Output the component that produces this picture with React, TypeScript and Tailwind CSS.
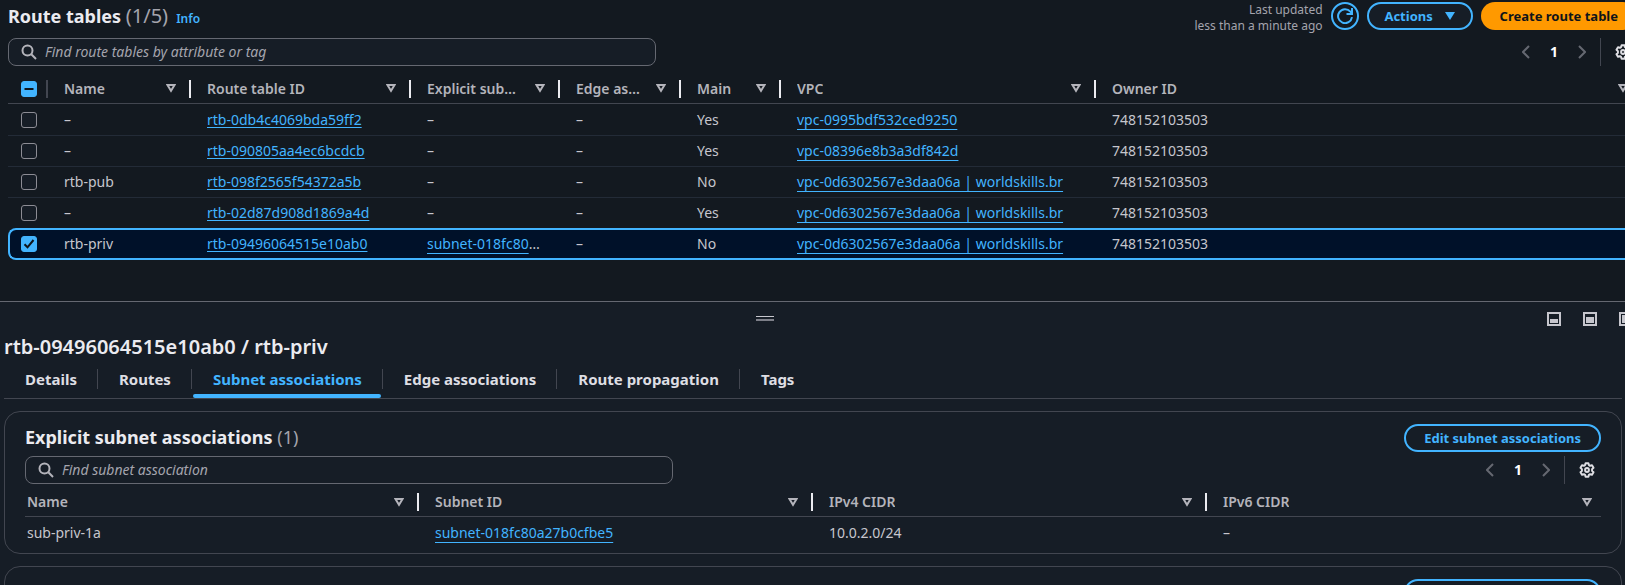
import React from "react";

const FONT = "font-['Noto_Sans','Open_Sans',sans-serif]";

function SearchIcon() {
  return (
    <svg viewBox="0 0 16 16" className="size-4 shrink-0" fill="none" stroke="#b4b4bb" strokeWidth="2" aria-hidden="true">
      <circle cx="6.5" cy="6.5" r="5" />
      <path d="M10.3 10.3 15 15" />
    </svg>
  );
}

function GearIcon() {
  return (
    <svg viewBox="0 0 16 16" className="size-4" fill="none" stroke="#dedee3" strokeWidth="2" strokeLinejoin="round" aria-hidden="true">
      <path d="M6.6 1.2h2.8l.5 1.9 1.2.7 1.9-.6 1.5 2.5-1.4 1.4v1.8l1.4 1.4-1.5 2.5-1.9-.6-1.2.7-.5 1.9H6.6l-.5-1.9-1.2-.7-1.9.6-1.5-2.5 1.4-1.4V7.1L1.5 5.7 3 3.2l1.9.6 1.2-.7z" />
      <circle cx="8" cy="8" r="1.9" />
    </svg>
  );
}

function SortIcon() {
  return (
    <svg viewBox="0 0 10 9" className="h-[9px] w-2.5 shrink-0" fill="none" stroke="#b4b4bb" strokeWidth="2" aria-hidden="true">
      <path d="M1.5 1h7L5 6.8z" />
    </svg>
  );
}

function PanelIcon({ kind }: { kind: "small" | "medium" | "side" }) {
  return (
    <svg viewBox="0 0 14 14" className="size-3.5" fill="#c6c6cd" aria-hidden="true">
      <path fillRule="evenodd" d="M0 0h14v14H0zM2 2v10h10V2z" />
      {kind === "small" && <path d="M3 7h8v4H3z" />}
      {kind === "medium" && <path d="M3 5h8v6H3z" />}
      {kind === "side" && <path d="M3 3h8v8H3z" />}
    </svg>
  );
}

function SearchBox({ id, label }: { id: string; label: string }) {
  return (
    <label
      htmlFor={id}
      className="flex h-7 w-full max-w-[648px] items-center gap-2 rounded-lg border border-[#656871] bg-[#161d26] px-3"
    >
      <SearchIcon />
      <input
        id={id}
        type="search"
        aria-label={label}
        placeholder={label}
        className="w-full min-w-0 bg-transparent text-sm leading-5 text-[#dedee3] outline-none placeholder:text-[#a4a4ad] placeholder:italic"
      />
    </label>
  );
}

function Pager() {
  return (
    <div className="flex h-7 items-center">
      <button type="button" aria-label="Previous page" className="flex w-5 justify-center">
        <svg viewBox="0 0 8 14" className="h-3.5 w-2" fill="none" stroke="#656871" strokeWidth="2">
          <path d="M7 1 1 7l6 6" />
        </svg>
      </button>
      <button type="button" className="w-9 text-center text-sm leading-5 font-bold text-white">
        1
      </button>
      <button type="button" aria-label="Next page" className="flex w-5 justify-center">
        <svg viewBox="0 0 8 14" className="h-3.5 w-2" fill="none" stroke="#656871" strokeWidth="2">
          <path d="m1 1 6 6-6 6" />
        </svg>
      </button>
      <span className="ml-2 h-7 border-l border-[#424650]" />
      <button type="button" aria-label="Preferences" className="mr-1.5 ml-3.5">
        <GearIcon />
      </button>
    </div>
  );
}

function HeadCell({ label, first, last }: { label: string; first?: boolean; last?: boolean }) {
  return (
    <th scope="col" className="p-0 text-left font-semibold">
      <div
        className={`flex h-[18px] items-center justify-between gap-4 ${first ? "pl-0.5" : "pl-4"} ${
          last ? "pr-[9px]" : "border-r-2 border-[#ebebf0] pr-[13px]"
        }`}
      >
        <span className="truncate leading-5">{label}</span>
        <button type="button" aria-label={`Sort by ${label}`}>
          <SortIcon />
        </button>
      </div>
    </th>
  );
}

function Link({ children, lined }: { children: React.ReactNode; lined?: boolean }) {
  return (
    <a
      href="#"
      className={`text-[#42b4ff] underline decoration-1 [text-decoration-skip-ink:none] ${
        lined ? "underline-offset-4" : "underline-offset-2"
      }`}
    >
      {children}
    </a>
  );
}

function Tick({ id, state }: { id: string; state: "off" | "on" | "mixed" }) {
  return (
    <span className="relative block size-4">
      <input
        type="checkbox"
        aria-label={id}
        defaultChecked={state !== "off"}
        className="block size-4 appearance-none rounded-[3px] border border-[#8c8c94] bg-[#161d26] checked:border-[#42b4ff] checked:bg-[#42b4ff]"
      />
      {state !== "off" && (
        <svg viewBox="0 0 16 16" className="pointer-events-none absolute inset-0 size-4" fill="none" stroke="#0f141a" strokeWidth="2">
          {state === "on" ? <path d="m3.5 8.3 3 3 6-7.3" /> : <path d="M3.5 8h9" />}
        </svg>
      )}
    </span>
  );
}

type Row = { name: string; id: string; subnet?: string; main: string; vpc: string; selected?: boolean };

const rows: Row[] = [
  { name: "–", id: "rtb-0db4c4069bda59ff2", main: "Yes", vpc: "vpc-0995bdf532ced9250" },
  { name: "–", id: "rtb-090805aa4ec6bcdcb", main: "Yes", vpc: "vpc-08396e8b3a3df842d" },
  { name: "rtb-pub", id: "rtb-098f2565f54372a5b", main: "No", vpc: "vpc-0d6302567e3daa06a | worldskills.br" },
  { name: "–", id: "rtb-02d87d908d1869a4d", main: "Yes", vpc: "vpc-0d6302567e3daa06a | worldskills.br" },
  {
    name: "rtb-priv",
    id: "rtb-09496064515e10ab0",
    subnet: "subnet-018fc80a27b0cfbe5",
    main: "No",
    vpc: "vpc-0d6302567e3daa06a | worldskills.br",
    selected: true,
  },
];

function RouteTables() {
  return (
    <section className="-mr-3 flex flex-col pl-2">
      <header className="flex h-9 items-start justify-between pt-0.5">
        <h1 className="text-lg leading-7 font-bold text-[#ebebf0]">
          Route tables <span className="text-xl leading-7 font-normal text-[#a4a4ad]">(1/5)</span>
          <a href="#" className="ml-2 text-xs font-semibold text-[#42b4ff]">
            Info
          </a>
        </h1>
        <div className="flex items-start gap-2">
          <p className="text-right text-xs leading-4 text-[#a4a4ad]">
            Last updated
            <br />
            less than a minute ago
          </p>
          <button
            type="button"
            aria-label="Refresh"
            className="flex size-7 items-center justify-center rounded-full border-2 border-[#42b4ff]"
          >
            <svg viewBox="0 0 16 16" className="size-4" fill="none" stroke="#42b4ff" strokeWidth="2">
              <path d="M15 9.2A7 7 0 1 1 13.4 3.6L14.6 5" />
              <path d="M15 0v6H9.5" />
            </svg>
          </button>
          <button
            type="button"
            className="flex h-7 w-[106px] items-center justify-center gap-3 rounded-full border-2 border-[#42b4ff] bg-[#161d26] text-[13px] leading-5 font-bold text-[#42b4ff]"
          >
            Actions
            <svg viewBox="0 0 10 8" className="h-2 w-2.5" fill="#42b4ff" aria-hidden="true">
              <path d="M0 0h10L5 8z" />
            </svg>
          </button>
          <button type="button" className="h-7 rounded-full bg-[#ff9900] px-[19px] text-[13px] leading-5 font-bold text-[#0f141a]">
            Create route table
          </button>
        </div>
      </header>

      <div className="mt-0.5 flex items-center justify-between">
        <SearchBox id="find-route-tables" label="Find route tables by attribute or tag" />
        <Pager />
      </div>

      <table className="mt-2 w-full table-fixed border-separate border-spacing-0 text-sm leading-5 text-[#c6c6cd]">
        <colgroup>
          <col className="w-10" />
          <col className="w-[143px]" />
          <col className="w-[220px]" />
          <col className="w-[149px]" />
          <col className="w-[121px]" />
          <col className="w-[100px]" />
          <col className="w-[315px]" />
          <col />
        </colgroup>
        <thead className="text-[#b4b4bb]">
          <tr className="h-[30px] [&>th]:border-b [&>th]:border-[#424650]">
            <th scope="col" className="p-0">
              <div className="flex h-[18px] items-center border-r-2 border-[#424650] pl-[13px]">
                <Tick id="Select all route tables" state="mixed" />
              </div>
            </th>
            <HeadCell label="Name" />
            <HeadCell label="Route table ID" />
            <HeadCell label="Explicit subnet associations" />
            <HeadCell label="Edge associations" />
            <HeadCell label="Main" />
            <HeadCell label="VPC" />
            <HeadCell label="Owner ID" last />
          </tr>
        </thead>
        <tbody>
          {rows.map((r, i) => (
            <tr
              key={r.id}
              className={
                r.selected
                  ? "h-8 bg-[#001129] [&>td]:border-y-2 [&>td]:border-[#42b4ff] [&>td:first-child]:rounded-l-lg [&>td:first-child]:border-l-2 [&>td:first-child]:pl-[11px] [&>td:last-child]:rounded-r-lg [&>td:last-child]:border-r-2"
                  : i === rows.length - 2
                    ? "h-[30px]"
                    : "h-[31px] first:h-8 [&>td]:border-b [&>td]:border-[#232b37]"
              }
            >
              <td className="py-0 pl-[13px]">
                <Tick id={`Select ${r.id}`} state={r.selected ? "on" : "off"} />
              </td>
              <td className="py-0 pl-4">{r.name}</td>
              <td className="py-0 pl-4">
                <Link>{r.id}</Link>
              </td>
              <td className="py-0 pr-4 pl-4">
                <div className="truncate">{r.subnet ? <Link lined>{r.subnet}</Link> : "–"}</div>
              </td>
              <td className="py-0 pl-4">–</td>
              <td className="py-0 pl-4">{r.main}</td>
              <td className="py-0 pl-4">
                <Link lined>{r.vpc}</Link>
              </td>
              <td className="py-0 pl-4">748152103503</td>
            </tr>
          ))}
        </tbody>
      </table>
    </section>
  );
}

const tabs = ["Details", "Routes", "Subnet associations", "Edge associations", "Route propagation", "Tags"];

function PillButton({ children }: { children: React.ReactNode }) {
  return (
    <button
      type="button"
      className="h-7 rounded-full border-2 border-[#42b4ff] px-[18px] text-[13px] leading-5 font-bold text-[#42b4ff]"
    >
      {children}
    </button>
  );
}

function SplitPanel() {
  return (
    <section className="mt-[41px] border-t border-[#656871] bg-[#161d26]">
      <div className="relative flex h-[31px] items-center justify-end pt-0.5">
        <button
          type="button"
          aria-label="Resize panel"
          className="absolute top-3.5 left-[46.5%] h-[5px] w-[18px] border-t border-b-2 border-t-[#c6c6cd] border-b-[#7d7f88]"
        />
        <div className="-mr-2 flex items-center gap-[22px]">
          <button type="button" aria-label="Small panel">
            <PanelIcon kind="small" />
          </button>
          <button type="button" aria-label="Medium panel">
            <PanelIcon kind="medium" />
          </button>
          <button type="button" aria-label="Full panel">
            <PanelIcon kind="side" />
          </button>
        </div>
      </div>

      <div className="pr-[3px] pl-1">
        <h2 className="text-xl leading-7 font-semibold text-[#ebebf0]">rtb-09496064515e10ab0 / rtb-priv</h2>

        <div role="tablist" className="flex h-[38px] items-start border-b border-[#424650] pt-2">
          {tabs.map((t, i) => (
            <div key={t} className={`relative h-5 ${i < tabs.length - 1 ? "border-r border-[#424650]" : ""}`}>
              <button
                type="button"
                role="tab"
                aria-selected={i === 2}
                className={`block pr-5 pl-[21px] text-[15px] leading-5 font-bold ${
                  i === 2 ? "text-[#42b4ff]" : "text-[#dedee3]"
                }`}
              >
                {t}
              </button>
              {i === 2 && <span className="absolute inset-x-px top-[25px] h-1 rounded-sm bg-[#42b4ff]" />}
            </div>
          ))}
        </div>

        <div className="mt-3 rounded-2xl border border-[#424650] px-5 pt-3 pb-1">
          <div className="flex items-start justify-between">
            <h3 className="text-lg leading-[26px] font-bold text-[#ebebf0]">
              Explicit subnet associations <span className="font-normal text-[#a4a4ad]">(1)</span>
            </h3>
            <PillButton>Edit subnet associations</PillButton>
          </div>
          <div className="mt-1 flex items-center justify-between">
            <SearchBox id="find-subnet" label="Find subnet association" />
            <Pager />
          </div>
          <table className="mt-1 w-full table-fixed border-separate border-spacing-0 text-sm leading-5 text-[#c6c6cd]">
            <thead className="text-[#b4b4bb]">
              <tr className="h-[29px] [&>th]:border-b [&>th]:border-[#424650]">
                <HeadCell label="Name" first />
                <HeadCell label="Subnet ID" />
                <HeadCell label="IPv4 CIDR" />
                <HeadCell label="IPv6 CIDR" last />
              </tr>
            </thead>
            <tbody>
              <tr className="h-8">
                <td className="py-0 pl-0.5">sub-priv-1a</td>
                <td className="py-0 pl-4">
                  <Link lined>subnet-018fc80a27b0cfbe5</Link>
                </td>
                <td className="py-0 pl-4">10.0.2.0/24</td>
                <td className="py-0 pl-4">–</td>
              </tr>
            </tbody>
          </table>
        </div>

        <div className="mt-3 flex justify-end rounded-2xl border border-[#424650] px-5 pt-3 pb-4">
          <PillButton>Edit subnet associations</PillButton>
        </div>
      </div>
    </section>
  );
}

export default function App() {
  return (
    <main className={`h-screen overflow-hidden bg-[#131920] ${FONT}`}>
      <RouteTables />
      <SplitPanel />
    </main>
  );
}
